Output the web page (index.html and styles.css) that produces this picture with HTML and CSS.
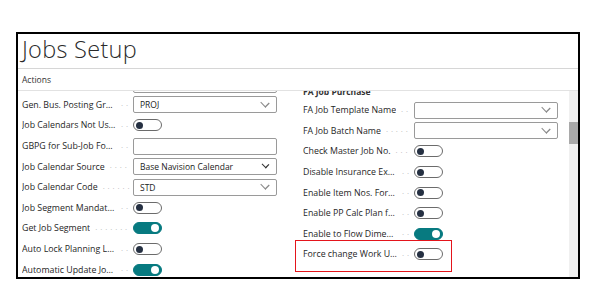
FILE: index.html
```html
<!DOCTYPE html>
<html>
<head>
	<meta charset="utf-8">
	<title>Jobs Setup</title>
	<link rel="stylesheet" href="styles.css">
</head>
<body>
	<div class="frame">
		<div class="title">Jobs Setup</div>
		<div class="actions">Actions</div>
		<div class="body">
			<div class="content">
				<div class="scroll">
					<div class="col">
						<div class="row"><span class="lbl"></span><span class="input"></span></div>
						<div class="row"><span class="lbl"><span class="txt">Gen. Bus. Posting Group</span><span class="lead"></span></span><span class="input select">PROJ<i class="chev"></i></span></div>
						<div class="row"><span class="lbl"><span class="txt">Job Calendars Not Used</span><span class="lead"></span></span><span class="toggle"></span></div>
						<div class="row"><span class="lbl"><span class="txt">GBPG for Sub-Job Forecast</span><span class="lead"></span></span><span class="input"></span></div>
						<div class="row"><span class="lbl"><span class="txt">Job Calendar Source</span><span class="lead"></span></span><span class="input select dark">Base Navision Calendar<i class="chev"></i></span></div>
						<div class="row"><span class="lbl"><span class="txt">Job Calendar Code</span><span class="lead"></span></span><span class="input select">STD<i class="chev"></i></span></div>
						<div class="row"><span class="lbl"><span class="txt">Job Segment Mandatory</span><span class="lead"></span></span><span class="toggle"></span></div>
						<div class="row"><span class="lbl"><span class="txt">Get Job Segment</span><span class="lead"></span></span><span class="toggle on"></span></div>
						<div class="row"><span class="lbl"><span class="txt">Auto Lock Planning Lines</span><span class="lead"></span></span><span class="toggle"></span></div>
						<div class="row"><span class="lbl"><span class="txt">Automatic Update Job Item Cost</span><span class="lead"></span></span><span class="toggle on"></span></div>
					</div>
					<div class="col right">
						<div class="group">FA Job Purchase</div>
						<div class="row"><span class="lbl"><span class="txt">FA Job Template Name</span><span class="lead"></span></span><span class="input select">&nbsp;<i class="chev"></i></span></div>
						<div class="row"><span class="lbl"><span class="txt">FA Job Batch Name</span><span class="lead"></span></span><span class="input select">&nbsp;<i class="chev"></i></span></div>
						<div class="row"><span class="lbl"><span class="txt">Check Master Job No.</span><span class="lead"></span></span><span class="toggle"></span></div>
						<div class="row"><span class="lbl"><span class="txt">Disable Insurance Expiry Check</span><span class="lead"></span></span><span class="toggle"></span></div>
						<div class="row"><span class="lbl"><span class="txt">Enable Item Nos. For Purchase</span><span class="lead"></span></span><span class="toggle"></span></div>
						<div class="row"><span class="lbl"><span class="txt">Enable PP Calc Plan for Job</span><span class="lead"></span></span><span class="toggle"></span></div>
						<div class="row"><span class="lbl"><span class="txt">Enable to Flow Dimensions</span><span class="lead"></span></span><span class="toggle on"></span></div>
						<div class="row marked"><span class="lbl"><span class="txt">Force change Work Unit</span><span class="lead"></span></span><span class="toggle"></span></div>
					</div>
				</div>
			</div>
			<div class="scrollbar"><div class="thumb"></div></div>
		</div>
	</div>
</body>
</html>
```

FILE: styles.css
```css
* { margin: 0; padding: 0; box-sizing: border-box; }
body { background: #fff; font-family: "Open Sans", "Noto Sans", sans-serif; color: #262626; }

.frame {
	margin: 32px 0 0 16px;
	width: 564px;
	height: 247px;
	border: 2px solid #000;
	display: flex;
	flex-direction: column;
}
.title {
	height: 35px;
	padding: 0 0 0 4px;
	font-family: "Open Sans Light", "Lato Light", "Open Sans", sans-serif;
	font-size: 23.5px;
	font-weight: 300;
	color: #2a2a2a;
	border-bottom: 1px solid #d6d6d6;
	line-height: 30px;
	letter-spacing: 0.3px;
}
.actions {
	height: 22px;
	padding-left: 4px;
	font-size: 8.5px;
	line-height: 21px;
	color: #333;
	border-bottom: 1px solid #e2e2e2;
}
.body { flex: 1; display: flex; min-height: 0; }
.content { flex: 1; overflow: hidden; }
.scroll { display: flex; gap: 26px; padding-left: 4px; margin-top: -17px; }
.scrollbar { width: 9px; background: #f0f0f0; padding-top: 31px; }
.thumb { height: 22px; background: #a9a9a9; }

.col { width: 255px; }
.col.right { padding-top: 9px; }
.group {
	height: 17px;
	font-size: 8.5px;
	font-weight: 700;
	line-height: 17px;
	color: #333;
}
.row {
	height: 20.6px;
	display: flex;
	align-items: center;
	font-size: 8.8px;
}
.lbl { width: 108px; display: flex; align-items: center; margin-right: 3px; }
.txt { white-space: nowrap; overflow: hidden; text-overflow: ellipsis; max-width: 94px; }
.lead { flex: 1; overflow: hidden; white-space: nowrap; color: #b0b0b0; padding-left: 5px; min-width: 8px; font-size: 8px; }
.lead::after { content: "\00b7\00a0\00b7\00a0\00b7\00a0\00b7\00a0\00b7\00a0\00b7\00a0\00b7\00a0\00b7\00a0\00b7\00a0\00b7"; letter-spacing: 0.4px; }

.input {
	width: 144px;
	height: 17px;
	border: 1px solid #9a9a9a;
	border-radius: 2px;
	display: flex;
	align-items: center;
	padding: 0 6px;
	font-size: 8.5px;
	color: #222;
}
.select { justify-content: space-between; }
.chev {
	width: 6px;
	height: 6px;
	border-right: 1px solid #888;
	border-bottom: 1px solid #888;
	transform: translateY(-2px) rotate(45deg) scaleX(1.2);
	margin-right: 2px;
}
.dark .chev { border-color: #333; width: 5px; height: 5px; }

.toggle {
	width: 29px;
	height: 12px;
	border: 1px solid #6b6b6b;
	border-radius: 6px;
	display: flex;
	align-items: center;
	padding: 0 2px;
}
.toggle::before {
	content: "";
	width: 7px;
	height: 7px;
	border-radius: 50%;
	background: #253042;
}
.toggle.on { background: #077a80; border-color: #077a80; justify-content: flex-end; }
.toggle.on::before { background: #fff; width: 8px; height: 8px; }

.marked { position: relative; }
.marked::after {
	content: "";
	position: absolute;
	left: -8px;
	top: -4px;
	width: 155px;
	height: 30px;
	border: 1px solid #e4141b;
}
```
